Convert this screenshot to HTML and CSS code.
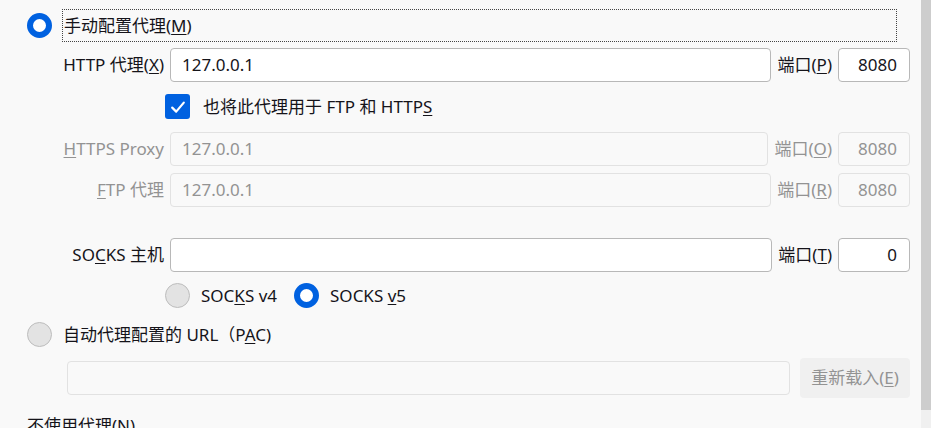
FILE: index.html
```html
<!DOCTYPE html>
<html lang="zh-CN">
<head>
<meta charset="utf-8">
<link rel="stylesheet" href="styles.css">
</head>
<body>
<div class="window">
  <div class="content">
    <div class="radio-row first">
      <span class="radio checked"></span>
      <span class="focus-label">手动配置代理(<u>M</u>)</span>
    </div>

    <div class="field-row r-http">
      <span class="lbl">HTTP 代理(<u>X</u>)</span>
      <div class="input">127.0.0.1</div>
      <span class="port-lbl">端口(<u>P</u>)</span>
      <div class="input port">8080</div>
    </div>

    <div class="check-row">
      <span class="checkbox"><svg viewBox="0 0 24 24" width="24" height="24"><path d="M6.2 12.6 L10.2 16.6 L17.8 7.6" fill="none" stroke="#fff" stroke-width="2.2" stroke-linecap="round" stroke-linejoin="round"/></svg></span>
      <span class="check-text">也将此代理用于 FTP 和 HTTP<u>S</u></span>
    </div>

    <div class="field-row disabled r-https">
      <span class="lbl"><u>H</u>TTPS Proxy</span>
      <div class="input">127.0.0.1</div>
      <span class="port-lbl wide">端口(<u>O</u>)</span>
      <div class="input port">8080</div>
    </div>

    <div class="field-row disabled r-ftp">
      <span class="lbl"><u>F</u>TP 代理</span>
      <div class="input">127.0.0.1</div>
      <span class="port-lbl">端口(<u>R</u>)</span>
      <div class="input port">8080</div>
    </div>

    <div class="field-row r-socks">
      <span class="lbl">SO<u>C</u>KS 主机</span>
      <div class="input"></div>
      <span class="port-lbl">端口(<u>T</u>)</span>
      <div class="input port">0</div>
    </div>

    <div class="socks-row">
      <span class="radio"></span>
      <span class="radio-text">SOC<u>K</u>S v4</span>
      <span class="radio checked v5"></span>
      <span class="radio-text">SOCKS <u>v</u>5</span>
    </div>

    <div class="radio-row pac">
      <span class="radio"></span>
      <span class="radio-text">自动代理配置的 URL（P<u>A</u>C)</span>
    </div>

    <div class="pac-row">
      <div class="input pac-input"></div>
      <div class="btn">重新载入(<u>E</u>)</div>
    </div>

    <div class="noproxy">不使用代理(<u>N</u>)</div>
  </div>
  <div class="scrollbar"><div class="thumb"></div></div>
</div>
</body>
</html>
```

FILE: styles.css
```css
* { box-sizing: border-box; }
html, body { margin: 0; padding: 0; }
body {
  background: #f9f9f9;
  color: #15141a;
  font-family: "Noto Sans", "Noto Sans CJK SC", sans-serif;
  font-size: 17px;
  line-height: 22px;
}
u { text-decoration-thickness: 1px; text-underline-offset: 2px; }
.window {
  display: flex;
  width: 931px;
  height: 428px;
  overflow: hidden;
}
.content {
  flex: 1;
  padding: 9px 11px 0 27px;
}
.scrollbar {
  width: 10px;
  height: 428px;
  background: #f0f0f0;
}
.thumb {
  height: 410px;
  background: #cdcdcd;
}

.radio {
  width: 25px;
  height: 25px;
  border-radius: 50%;
  background: #e3e3e3;
  border: 1px solid #bdbdbd;
  flex: none;
}
.radio.checked {
  background: #fff;
  border: 6px solid #0061e0;
}
.radio-row {
  display: flex;
  align-items: center;
}
.radio-row.first .radio { margin-right: 10px; }
.focus-label {
  flex: 1;
  height: 33px;
  line-height: 31px;
  border: 1px dotted #444;
  padding: 0 1px;
  margin-right: 13px;
}

.field-row {
  display: flex;
  align-items: center;
  height: 34px;
}
.r-http { margin-top: 6px; }
.r-https { margin-top: 13px; }
.r-ftp { margin-top: 7px; }
.r-socks { margin-top: 31px; }
.lbl {
  width: 137px;
  text-align: right;
  margin-right: 6px;
  white-space: nowrap;
}
.input {
  flex: 1;
  height: 34px;
  background: #fff;
  border: 1px solid #b8b8b8;
  border-radius: 4px;
  padding: 0 12px 0 11px;
  line-height: 32px;
  white-space: nowrap;
}
.input.port {
  flex: none;
  width: 72px;
  text-align: right;
}
.port-lbl {
  margin: 0 6px;
  white-space: nowrap;
}
.port-lbl.wide { margin-left: 7px; }
.disabled { color: #939393; }
.disabled .input {
  background: #f9f9f9;
  border-color: #e2e2e2;
}

.check-row {
  display: flex;
  align-items: center;
  margin: 12px 0 0 138px;
  height: 25px;
}
.checkbox {
  width: 25px;
  height: 25px;
  border-radius: 3px;
  background: #0061e0;
  display: flex;
  align-items: center;
  justify-content: center;
  margin-right: 13px;
}

.socks-row {
  display: flex;
  align-items: center;
  margin: 11px 0 0 138px;
  height: 25px;
}
.radio-text { margin-left: 11px; white-space: nowrap; }
.radio.v5 { margin-left: 17px; }

.radio-row.pac { margin-top: 14px; }

.pac-row {
  display: flex;
  align-items: center;
  margin: 11px 0 0 40px;
  height: 40px;
}
.pac-input {
  background: #f9f9f9;
  border-color: #e2e2e2;
}
.btn {
  width: 110px;
  height: 40px;
  margin-left: 10px;
  background: #f0f0f0;
  border-radius: 4px;
  color: #939393;
  text-align: center;
  line-height: 40px;
}
.noproxy {
  margin-top: 17px;
}
```
